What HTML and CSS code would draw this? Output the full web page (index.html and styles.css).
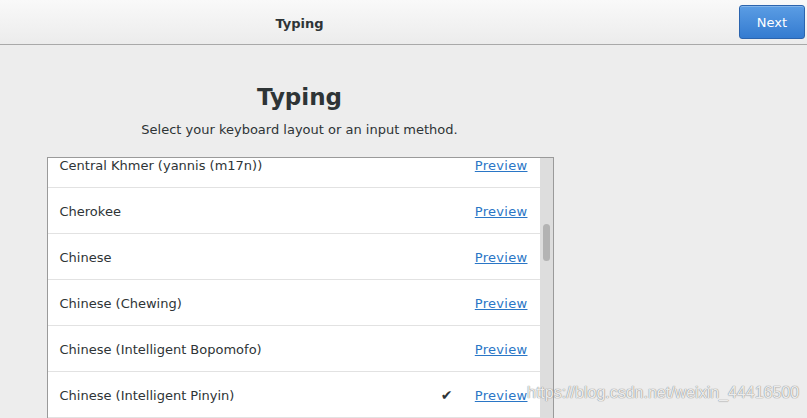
FILE: index.html
```html
<!DOCTYPE html>
<html>
<head>
<meta charset="utf-8">
<link rel="stylesheet" href="styles.css">
</head>
<body>
<header class="topbar">
  <div class="topbar-title">Typing</div>
  <div class="topbar-actions"><button class="btn-next">Next</button></div>
</header>
<main class="page">
  <section class="content">
    <h1 class="title">Typing</h1>
    <p class="subtitle">Select your keyboard layout or an input method.</p>
    <div class="listbox">
      <div class="list-viewport">
        <ul class="list">
          <li class="row"><span class="row-name">Central Khmer (yannis (m17n))</span><span class="row-check"></span><a class="row-link">Preview</a></li>
          <li class="row"><span class="row-name">Cherokee</span><span class="row-check"></span><a class="row-link">Preview</a></li>
          <li class="row"><span class="row-name">Chinese</span><span class="row-check"></span><a class="row-link">Preview</a></li>
          <li class="row"><span class="row-name">Chinese (Chewing)</span><span class="row-check"></span><a class="row-link">Preview</a></li>
          <li class="row"><span class="row-name">Chinese (Intelligent Bopomofo)</span><span class="row-check"></span><a class="row-link">Preview</a></li>
          <li class="row"><span class="row-name">Chinese (Intelligent Pinyin)</span><span class="row-check">&#10004;</span><a class="row-link">Preview</a></li>
        </ul>
      </div>
      <div class="scrollbar"><div class="thumb"></div></div>
    </div>
  </section>
</main>
<div class="watermark">https://blog.csdn.net/weixin_44416500</div>
</body>
</html>
```
FILE: styles.css
```css
* { box-sizing: border-box; }
html, body { margin: 0; padding: 0; }
body {
  width: 807px;
  height: 418px;
  overflow: hidden;
  background: #ededed;
  font-family: "DejaVu Sans", sans-serif;
  color: #2e3436;
  position: relative;
}
.topbar {
  height: 45px;
  display: flex;
  align-items: center;
  background: linear-gradient(#f9f9f9, #ececec);
  border-bottom: 1px solid #a9a9a9;
}
.topbar-title {
  width: 599px;
  text-align: center;
  font-weight: bold;
  font-size: 13px;
  padding-top: 2px;
}
.topbar-actions {
  flex: 1;
  display: flex;
  justify-content: flex-end;
  padding-right: 2px;
}
.btn-next {
  width: 66px;
  height: 34px;
  border: 1px solid #2b64ae;
  border-radius: 3px;
  background: linear-gradient(#5b9de4, #347bd0);
  color: #fff;
  font-family: inherit;
  font-size: 13px;
  padding: 0;
  box-shadow: inset 0 1px 0 rgba(255,255,255,0.25);
}
.page { display: flex; }
.content {
  width: 599px;
  display: flex;
  flex-direction: column;
  align-items: center;
}
.title {
  margin: 37px 0 0;
  font-size: 23px;
  font-weight: bold;
  line-height: 30px;
}
.subtitle {
  margin: 10px 0 0;
  font-size: 13px;
  line-height: 16px;
}
.listbox {
  margin-top: 19px;
  margin-left: 1px;
  width: 507px;
  height: 280px;
  border: 1px solid #9a9a9a;
  background: #fff;
  display: flex;
}
.list-viewport {
  flex: 1;
  overflow: hidden;
}
.list {
  list-style: none;
  margin: -16px 0 0;
  padding: 0;
}
.row {
  height: 46px;
  display: flex;
  align-items: center;
  border-bottom: 1px solid #e2e2e2;
  padding: 1px 12px 0 12px;
  font-size: 13px;
}
.row-name { flex: 1; }
.row-check {
  width: 20px;
  margin-right: 14px;
  font-size: 14px;
  color: #2e3436;
}
.row-link {
  color: #2a76c6;
  text-decoration: underline;
  letter-spacing: 0.3px;
}
.scrollbar {
  width: 13px;
  background: #dddddd;
  padding: 66px 3px 0 3px;
}
.thumb {
  height: 37px;
  border-radius: 4px;
  background: #b3b3b3;
}
.watermark {
  position: absolute;
  left: 527px;
  top: 384px;
  font-family: "Liberation Sans", Arial, sans-serif;
  font-size: 16px;
  color: rgba(250,250,250,0.9);
  text-shadow: 0 0 1px #8a8a8a, 0 0 1px #8a8a8a;
  white-space: nowrap;
}
```
